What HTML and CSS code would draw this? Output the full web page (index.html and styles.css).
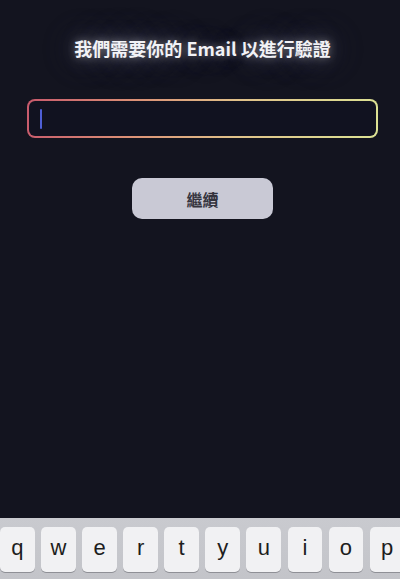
FILE: index.html
```html
<!DOCTYPE html>
<html lang="zh-Hant">
<head>
<meta charset="utf-8">
<title>Email 驗證</title>
<link rel="stylesheet" href="styles.css">
</head>
<body>
<div class="screen">
  <main class="content">
    <h1 class="title">我們需要你的 Email 以進行驗證</h1>
    <div class="field"><span class="caret"></span></div>
    <button class="btn">繼續</button>
  </main>
  <div class="keyboard">
    <div class="key">q</div>
    <div class="key">w</div>
    <div class="key">e</div>
    <div class="key">r</div>
    <div class="key">t</div>
    <div class="key">y</div>
    <div class="key">u</div>
    <div class="key">i</div>
    <div class="key">o</div>
    <div class="key">p</div>
  </div>
</div>
</body>
</html>
```
FILE: styles.css
```css
html, body {
  margin: 0;
  padding: 0;
  background: #13141f;
  overflow: hidden;
}
.screen {
  width: 405px;
  height: 579px;
  display: flex;
  flex-direction: column;
  font-family: "Noto Sans CJK TC", "Noto Sans", sans-serif;
}
.content {
  flex: 1;
  display: flex;
  flex-direction: column;
  align-items: center;
  padding-top: 35px;
}
.title {
  margin: 0;
  font-size: 18px;
  line-height: 26px;
  font-weight: 700;
  color: #f2f2f6;
  text-shadow: 0 0 8px rgba(255, 255, 255, 0.4), 0 0 24px rgba(210, 210, 240, 0.3), 0 0 44px rgba(200, 200, 240, 0.25);
}
.field {
  box-sizing: border-box;
  align-self: stretch;
  margin: 38px 27px 0;
  height: 39px;
  border-radius: 8px;
  border: 2px solid transparent;
  background:
    linear-gradient(#111220, #111220) padding-box,
    linear-gradient(100deg, #c85a6c 0%, #dc9076 30%, #e0c28a 60%, #dce294 100%) border-box;
  display: flex;
  align-items: center;
  padding-left: 11px;
}
.caret {
  width: 2px;
  height: 20px;
  border-radius: 1px;
  background: #4f5fd6;
}
.btn {
  margin-top: 40px;
  width: 141px;
  height: 41px;
  border: none;
  border-radius: 10px;
  background: #c9c9d5;
  color: #34343e;
  font-family: "Noto Sans CJK TC", sans-serif;
  font-size: 16px;
  font-weight: 700;
  padding: 0;
}
.keyboard {
  height: 61px;
  box-sizing: border-box;
  padding-top: 9px;
  background: linear-gradient(#c9cacf, #c3c4c9);
  display: flex;
  gap: 6.4px;
}
.key {
  width: 34.7px;
  height: 45px;
  flex: none;
  border-radius: 5px;
  background: #f1f1f3;
  box-shadow: 0 1px 0 #8f9096;
  display: flex;
  align-items: center;
  justify-content: center;
  font-family: "Liberation Sans", Arial, sans-serif;
  font-size: 22px;
  color: #1d1d20;
  padding-bottom: 3px;
  box-sizing: border-box;
}
```
